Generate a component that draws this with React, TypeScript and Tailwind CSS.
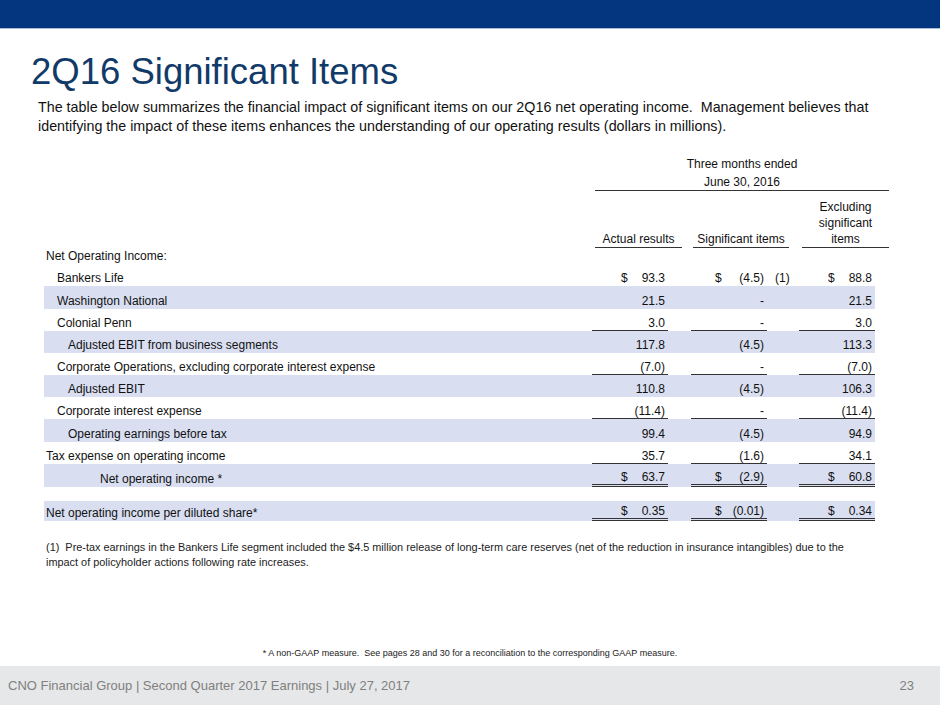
import clsx from 'clsx'

type Line = 'single' | 'double' | undefined

type Row = {
  label: string
  indent: string
  shade?: boolean
  h?: string
  a?: string
  s?: string
  e?: string
  dollar?: boolean
  note?: string
  line?: Line
}

const rows: Row[] = [
  { label: 'Bankers Life', indent: 'pl-[13px]', a: '93.3', s: '(4.5)', e: '88.8', dollar: true, note: '(1)' },
  { label: 'Washington National', indent: 'pl-[13px]', shade: true, h: 'h-[23px]', a: '21.5', s: '-', e: '21.5' },
  { label: 'Colonial Penn', indent: 'pl-[13px]', a: '3.0', s: '-', e: '3.0', line: 'single' },
  { label: 'Adjusted EBIT from business segments', indent: 'pl-[24px]', shade: true, a: '117.8', s: '(4.5)', e: '113.3' },
  { label: 'Corporate Operations, excluding corporate interest expense', indent: 'pl-[13px]', a: '(7.0)', s: '-', e: '(7.0)', line: 'single' },
  { label: 'Adjusted EBIT', indent: 'pl-[24px]', shade: true, a: '110.8', s: '(4.5)', e: '106.3' },
  { label: 'Corporate interest expense', indent: 'pl-[13px]', a: '(11.4)', s: '-', e: '(11.4)', line: 'single' },
  { label: 'Operating earnings before tax', indent: 'pl-[24px]', shade: true, h: 'h-[23px]', a: '99.4', s: '(4.5)', e: '94.9' },
  { label: 'Tax expense on operating income', indent: 'pl-[2px]', a: '35.7', s: '(1.6)', e: '34.1', line: 'single' },
  { label: 'Net operating income *', indent: 'pl-[56px]', shade: true, h: 'h-[23px]', a: '63.7', s: '(2.9)', e: '60.8', dollar: true, line: 'double' },
]

const perShare: Row = {
  label: 'Net operating income per diluted share*',
  indent: 'pl-[2px]',
  shade: true,
  h: 'h-[20px]',
  a: '0.35',
  s: '(0.01)',
  e: '0.34',
  dollar: true,
  line: 'double',
}

const NumCell = ({ value, dollar, pad, line }: { value?: string; dollar?: boolean; pad: string; line: Line }) => (
  <div
    className={clsx(
      'flex w-[76px] items-end pr-[3px]',
      line === 'single' && 'border-b border-[#333]',
      line === 'double' && 'border-b-[3px] border-double border-[#333]',
      line ? 'pb-0' : 'pb-[1px]'
    )}
  >
    {dollar && <span className={clsx('leading-[14px]', pad)}>$</span>}
    <span className="ml-auto leading-[14px]">{value}</span>
  </div>
)

const TableRow = ({ row }: { row: Row }) => (
  <div className={clsx('flex', row.h ?? 'h-[22px]', row.shade && 'bg-[#d9dff1]')}>
    <div className={clsx('flex flex-1 items-end pb-[1px] leading-[14px]', row.indent)}>{row.label}</div>
    <NumCell value={row.a} dollar={row.dollar} pad="pl-[29px]" line={row.line} />
    <div className="w-[23px]" />
    <NumCell value={row.s} dollar={row.dollar} pad="pl-[24px]" line={row.line} />
    <div className="flex w-[32px] items-end pb-[1px] pl-[8px] leading-[14px]">{row.note}</div>
    <NumCell value={row.e} dollar={row.dollar} pad="pl-[29px]" line={row.line} />
  </div>
)

export default function App() {
  return (
    <div className="flex h-[705px] w-[940px] flex-col overflow-hidden bg-white font-['Liberation_Sans',Arial,sans-serif] text-[#111]">
      <div className="h-[29px] border-b border-[#a7bbd8] bg-[#03367f]" />

      <h1 className="mt-[25px] pl-[31px] text-[36.5px] leading-[36px] text-[#123a69]">2Q16 Significant Items</h1>

      <p className="mt-[8px] pl-[38px] text-[14.3px] leading-[19px]">
        The table below summarizes the financial impact of significant items on our 2Q16 net operating income.&nbsp; Management believes that
        <br />
        identifying the impact of these items enhances the understanding of our operating results (dollars in millions).
      </p>

      <div className="mt-[19px] text-[12px]">
        <div className="ml-[595px] w-[294px] text-center">
          <div className="leading-[18px]">Three months ended</div>
          <div className="mt-[1px] border-b border-[#333] leading-[16px]">June 30, 2016</div>
          <div className="mt-[8px] flex items-end leading-[16px]">
            <div className="w-[87px] border-b border-[#333]">Actual results</div>
            <div className="w-[11px]" />
            <div className="w-[96px] border-b border-[#333]">Significant items</div>
            <div className="w-[13px]" />
            <div className="w-[87px] border-b border-[#333]">
              Excluding
              <br />
              significant
              <br />
              items
            </div>
          </div>
        </div>

        <div className="ml-[44px] w-[831px]">
          <div className="flex h-[16px] items-end pb-[1px] pl-[2px] leading-[14px]">Net Operating Income:</div>
          {rows.map((row) => (
            <TableRow key={row.label} row={row} />
          ))}
          <div className="h-[14px]" />
          <TableRow row={perShare} />
        </div>
      </div>

      <p className="mt-[19px] pl-[46px] text-[10.9px] leading-[15px] text-[#222]">
        (1)&nbsp; Pre-tax earnings in the Bankers Life segment included the $4.5 million release of long-term care reserves (net of the reduction in insurance intangibles) due to the
        <br />
        impact of policyholder actions following rate increases.
      </p>

      <p className="mt-auto mb-[7px] text-center text-[9px] leading-[12px] text-[#222]">
        * A non-GAAP measure.&nbsp; See pages 28 and 30 for a reconciliation to the corresponding GAAP measure.
      </p>

      <div className="flex h-[39px] items-center justify-between bg-[#e6e7e8] pl-[8px] pr-[26px] text-[13px] text-[#7f7f7f]">
        <span>CNO Financial Group | Second Quarter 2017 Earnings | July 27, 2017</span>
        <span>23</span>
      </div>
    </div>
  )
}
